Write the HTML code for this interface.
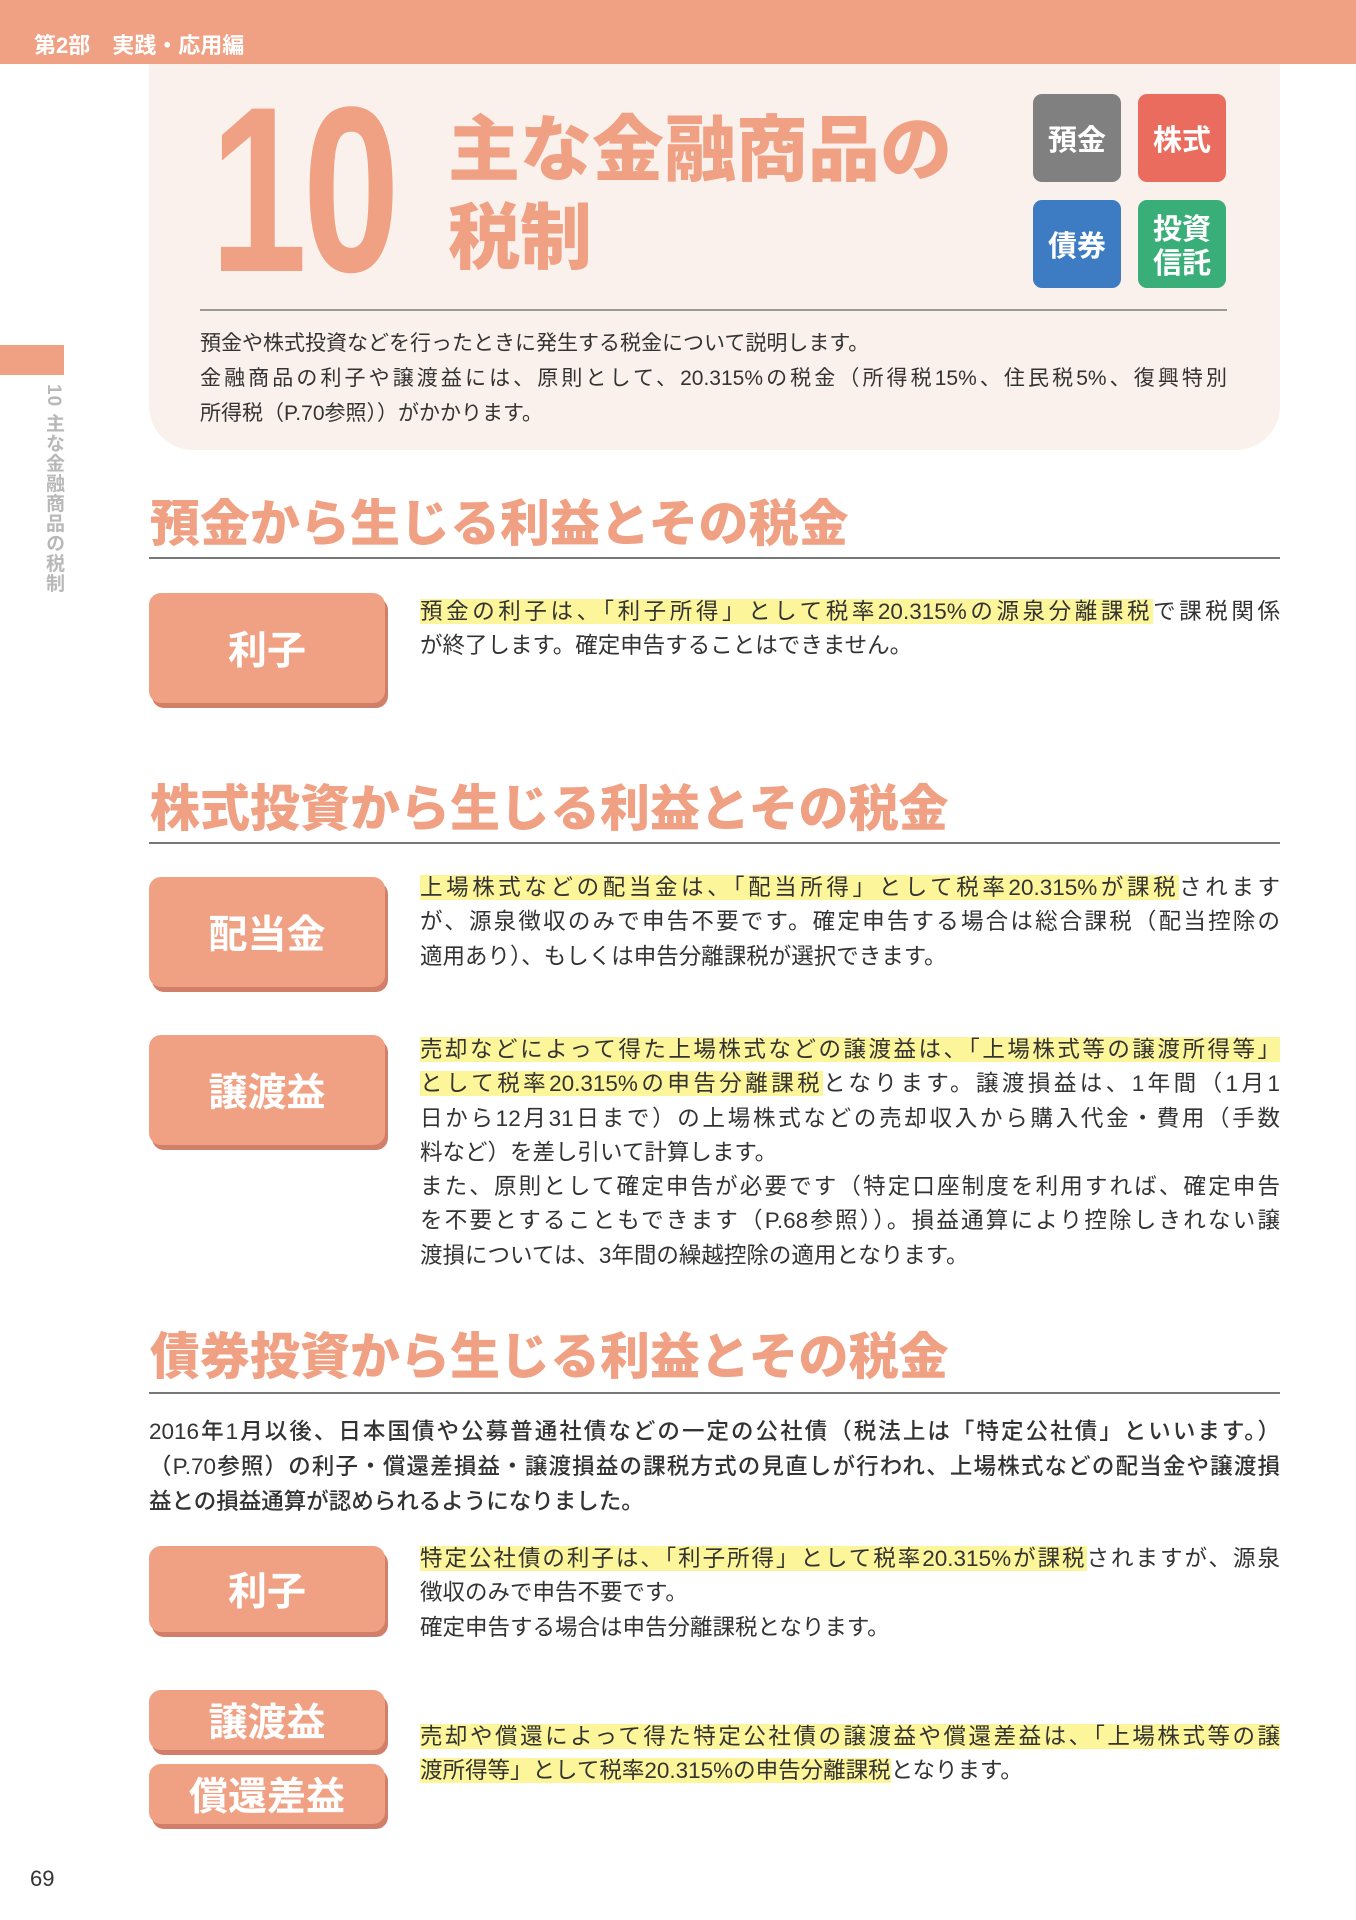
<!DOCTYPE html>
<html><head><meta charset="utf-8"><style>
*{margin:0;padding:0;box-sizing:border-box}
body{width:1356px;height:1920px;position:relative;background:#fff;font-family:"Liberation Sans","Noto Sans CJK JP",sans-serif;color:#3a3a3a;overflow:hidden}
.a{position:absolute}
.hdr{left:0;top:0;width:1356px;height:64px;background:#f0a083}
.hdr span{position:absolute;left:34px;top:28px;font-size:22px;font-weight:bold;color:#fff;white-space:pre}
.intro{left:149px;top:64px;width:1131px;height:386px;background:#fbf1ec;border-radius:0 0 44px 44px}
.big{left:210px;top:72px;font-size:236px;font-weight:bold;color:#f0a083;letter-spacing:-6px;line-height:236px;font-family:"Liberation Sans",sans-serif;transform:scaleX(0.74);transform-origin:left top}
.title{left:448px;top:100px;font-size:72px;font-weight:900;color:#f0a083;line-height:88px;font-family:"Noto Sans CJK JP",sans-serif}
.bd{width:88px;height:88px;border-radius:9px;color:#fff;font-weight:bold;font-size:29px;display:flex;align-items:center;justify-content:center;text-align:center;line-height:34px;font-family:"Noto Sans CJK JP",sans-serif}
.intxt{left:200px;top:326px;font-size:21px;line-height:35px;color:#333;width:1030px}
.side{left:0;top:345px;width:64px;height:30px;background:#f0a083}
.vt{left:43px;top:384px;width:24px;font-size:19px;font-weight:bold;color:#b8b8b8;writing-mode:vertical-rl;letter-spacing:1px}
.h2{left:150px;font-size:50px;font-weight:900;color:#f0a083;font-family:"Noto Sans CJK JP",sans-serif;line-height:60px}
.rule{left:149px;width:1131px;height:2px;background:#777}
.box{left:149px;width:236px;background:#f0a083;border-radius:12px;box-shadow:3px 5px 0 #d27f69;color:#fff;font-weight:bold;font-size:39px;display:flex;align-items:center;justify-content:center;font-family:"Noto Sans CJK JP",sans-serif}
.p{left:420px;width:860px;font-size:22.5px;line-height:34.3px;color:#333}
.p div{white-space:nowrap}
.p .j{text-align:justify;text-align-last:justify}
mark{background:#fdf59a;color:inherit}
</style></head><body>
<div class="a hdr"><span>第2部　実践・応用編</span></div>
<div class="a intro"></div>
<div class="a big">10</div>
<div class="a title">主な金融商品の<br>税制</div>
<div class="a bd" style="left:1033px;top:94px;background:#808080">預金</div>
<div class="a bd" style="left:1138px;top:94px;background:#e96c5e">株式</div>
<div class="a bd" style="left:1033px;top:200px;background:#3d7cc3">債券</div>
<div class="a bd" style="left:1138px;top:200px;background:#3aae78">投資<br>信託</div>
<div class="a" style="left:200px;top:309px;width:1027px;height:2px;background:#999"></div>
<div class="a intxt">預金や株式投資などを行ったときに発生する税金について説明します。<br><span style="display:block;text-align:justify;text-align-last:justify;width:1027px">金融商品の利子や譲渡益には、原則として、20.315%の税金（所得税15%、住民税5%、復興特別</span>所得税（P.70参照））がかかります。</div>
<div class="a side"></div>
<div class="a vt">10 主な金融商品の税制</div>

<div class="a h2" style="top:490px">預金から生じる利益とその税金</div>
<div class="a rule" style="top:557px"></div>
<div class="a box" style="top:593px;height:110px">利子</div>
<div class="a p" style="top:595px">
<div class="j"><mark>預金の利子は、「利子所得」として税率20.315%の源泉分離課税</mark>で課税関係</div>
<div>が終了します。確定申告することはできません。</div>
</div>

<div class="a h2" style="top:775px">株式投資から生じる利益とその税金</div>
<div class="a rule" style="top:842px"></div>
<div class="a box" style="top:877px;height:110px">配当金</div>
<div class="a p" style="top:871px">
<div class="j"><mark>上場株式などの配当金は、「配当所得」として税率20.315%が課税</mark>されます</div>
<div class="j">が、源泉徴収のみで申告不要です。確定申告する場合は総合課税（配当控除の</div>
<div>適用あり）、もしくは申告分離課税が選択できます。</div>
</div>
<div class="a box" style="top:1035px;height:110px">譲渡益</div>
<div class="a p" style="top:1033px">
<div class="j"><mark>売却などによって得た上場株式などの譲渡益は、「上場株式等の譲渡所得等」</mark></div>
<div class="j"><mark>として税率20.315%の申告分離課税</mark>となります。譲渡損益は、1年間（1月1</div>
<div class="j">日から12月31日まで）の上場株式などの売却収入から購入代金・費用（手数</div>
<div>料など）を差し引いて計算します。</div>
<div class="j">また、原則として確定申告が必要です（特定口座制度を利用すれば、確定申告</div>
<div class="j">を不要とすることもできます（P.68参照））。損益通算により控除しきれない譲</div>
<div>渡損については、3年間の繰越控除の適用となります。</div>
</div>

<div class="a h2" style="top:1323px">債券投資から生じる利益とその税金</div>
<div class="a rule" style="top:1392px"></div>
<div class="a p" style="left:149px;width:1131px;top:1414px;line-height:35px;font-weight:500">
<div class="j">2016年1月以後、日本国債や公募普通社債などの一定の公社債（税法上は「特定公社債」といいます。）</div>
<div class="j">（P.70参照）の利子・償還差損益・譲渡損益の課税方式の見直しが行われ、上場株式などの配当金や譲渡損</div>
<div>益との損益通算が認められるようになりました。</div>
</div>
<div class="a box" style="top:1546px;height:86px">利子</div>
<div class="a p" style="top:1542px">
<div class="j"><mark>特定公社債の利子は、「利子所得」として税率20.315%が課税</mark>されますが、源泉</div>
<div>徴収のみで申告不要です。</div>
<div>確定申告する場合は申告分離課税となります。</div>
</div>
<div class="a box" style="top:1690px;height:60px">譲渡益</div>
<div class="a box" style="top:1764px;height:60px">償還差益</div>
<div class="a p" style="top:1720px">
<div class="j"><mark>売却や償還によって得た特定公社債の譲渡益や償還差益は、「上場株式等の譲</mark></div>
<div><mark>渡所得等」として税率20.315%の申告分離課税</mark>となります。</div>
</div>
<div class="a" style="left:30px;top:1866px;font-size:22px;color:#333">69</div>
</body></html>
